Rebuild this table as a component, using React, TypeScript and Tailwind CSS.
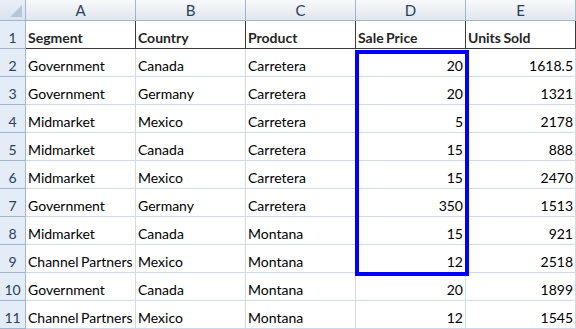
const rows: [string, string, string, string, string][] = [
  ["Government", "Canada", "Carretera", "20", "1618.5"],
  ["Government", "Germany", "Carretera", "20", "1321"],
  ["Midmarket", "Mexico", "Carretera", "5", "2178"],
  ["Midmarket", "Canada", "Carretera", "15", "888"],
  ["Midmarket", "Mexico", "Carretera", "15", "2470"],
  ["Government", "Germany", "Carretera", "350", "1513"],
  ["Midmarket", "Canada", "Montana", "15", "921"],
  ["Channel Partners", "Mexico", "Montana", "12", "2518"],
  ["Government", "Canada", "Montana", "20", "1899"],
  ["Channel Partners", "Mexico", "Montana", "12", "1545"],
];

const headings = ["Segment", "Country", "Product", "Sale Price", "Units Sold"];
const letters = ["A", "B", "C", "D", "E"];

function RowNumber({ n }: { n: number }) {
  return (
    <div className="flex items-end justify-center pb-[1px] bg-[#e4ecf7] border-r border-b border-[#9eb6ce] text-[#27415f] leading-[18px]">
      {n}
    </div>
  );
}

export default function App() {
  return (
    <div
      className="relative w-[576px] h-[329px] overflow-hidden bg-white text-[14px] text-black [word-spacing:-1px]"
      style={{ fontFamily: "Lato, 'Open Sans', sans-serif" }}
    >
      <div className="grid grid-cols-[26px_repeat(5,110px)] grid-rows-[21px_repeat(11,28px)]">
        {/* corner */}
        <div className="relative bg-gradient-to-b from-[#e9eff7] to-[#d9e3ef] border-r border-b border-[#9eb6ce]">
          <div className="absolute right-[3px] bottom-[3px] w-0 h-0 border-l-[12px] border-l-transparent border-b-[12px] border-b-[#b7c7da]" />
        </div>
        {letters.map((l) => (
          <div
            key={l}
            className="flex items-center justify-center bg-gradient-to-b from-[#f8f9fb] to-[#e1e6ed] border-r border-b border-[#9eb6ce] text-[#27415f] text-[15px]"
          >
            {l}
          </div>
        ))}

        {/* heading row */}
        <RowNumber n={1} />
        {headings.map((h) => (
          <div
            key={h}
            className="flex items-end pl-[2px] pb-[1px] border-r border-b border-r-[#3a3a3a] border-b-[#3a3a3a] font-bold text-[#262626] leading-[18px] whitespace-nowrap"
          >
            {h}
          </div>
        ))}

        {rows.map((r, i) => (
          <div key={i} className="contents">
            <RowNumber n={i + 2} />
            {r.map((c, j) => (
              <div
                key={j}
                className={`flex items-end pb-[1px] border-r border-b border-[#d0d7e5] leading-[18px] whitespace-nowrap overflow-hidden ${
                  j >= 3 ? "justify-end pr-[2px]" : "pl-[2px]"
                }`}
              >
                {c}
              </div>
            ))}
          </div>
        ))}
      </div>

      {/* selection around D2:D9 */}
      <div className="absolute left-[355px] top-[50px] w-[114px] h-[226px] border-4 border-[#0000ff]" />
    </div>
  );
}
